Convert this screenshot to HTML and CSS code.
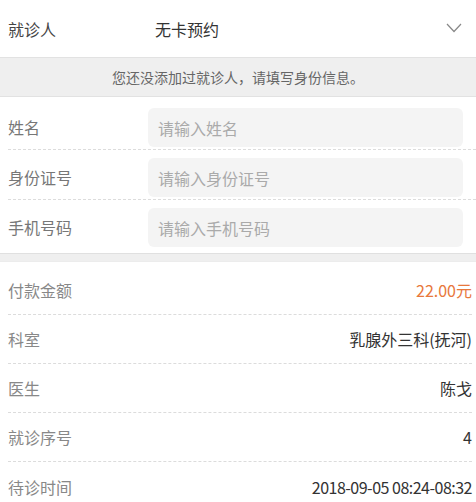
FILE: index.html
```html
<!DOCTYPE html>
<html lang="zh-CN">
<head>
    <meta charset="UTF-8">
    <meta name="viewport" content="width=device-width, initial-scale=1.0">
    <title>就诊人</title>
    <link rel="stylesheet" href="styles.css">
</head>
<body>
    <div class="patient-select">
        <span class="patient-label">就诊人</span>
        <span class="patient-value">无卡预约</span>
        <svg class="chevron" viewBox="0 0 16 10" width="16" height="10">
            <path d="M1 1 L8 8.5 L15 1" fill="none" stroke="#888" stroke-width="1.2"/>
        </svg>
    </div>
    <div class="notice">您还没添加过就诊人，请填写身份信息。</div>
    <div class="form">
        <div class="form-row">
            <label class="form-label">姓名</label>
            <input type="text" placeholder="请输入姓名">
        </div>
        <div class="form-row">
            <label class="form-label">身份证号</label>
            <input type="text" placeholder="请输入身份证号">
        </div>
        <div class="form-row">
            <label class="form-label">手机号码</label>
            <input type="text" placeholder="请输入手机号码">
        </div>
    </div>
    <div class="gap"></div>
    <div class="info">
        <div class="info-row">
            <span class="info-label">付款金额</span>
            <span class="info-value price">22.00元</span>
        </div>
        <div class="info-row">
            <span class="info-label">科室</span>
            <span class="info-value">乳腺外三科(抚河)</span>
        </div>
        <div class="info-row">
            <span class="info-label">医生</span>
            <span class="info-value">陈戈</span>
        </div>
        <div class="info-row">
            <span class="info-label">就诊序号</span>
            <span class="info-value">4</span>
        </div>
        <div class="info-row">
            <span class="info-label">待诊时间</span>
            <span class="info-value date">2018-09-05 08:24-08:32</span>
        </div>
    </div>
</body>
</html>
```

FILE: styles.css
```css
* {
    margin: 0;
    padding: 0;
    box-sizing: border-box;
    font-family: "Noto Sans CJK SC", "Noto Sans", sans-serif;
}
body {
    background: #fff;
    color: #333;
    font-size: 16px;
    overflow: hidden;
}
.patient-select {
    height: 57px;
    display: flex;
    align-items: center;
    padding: 0 14px 0 8px;
}
.patient-label {
    width: 147px;
    color: #444;
}
.patient-value {
    flex: 1;
    color: #333;
}
.chevron {
    margin-top: -1px;
}
.notice {
    height: 40px;
    background: #efefef;
    border-top: 1px solid #e2e2e2;
    border-bottom: 1px solid #e2e2e2;
    display: flex;
    align-items: center;
    justify-content: center;
    font-size: 14px;
    color: #666;
}
.form {
    padding: 3px 0 4px 8px;
}
.form-row {
    display: flex;
    align-items: center;
    padding: 8px 13px 2px 0;
    border-bottom: 1px dashed #dcdcdc;
}
.form-row:last-child {
    border-bottom: none;
}
.form-label {
    width: 140px;
    color: #777;
    margin-top: -2px;
}
input {
    flex: 1;
    height: 39px;
    border: none;
    border-radius: 6px;
    background: #f4f4f4;
    padding: 0 10px;
    font-size: 16px;
    color: #333;
    outline: none;
}
input::placeholder {
    color: #aaa;
}
.gap {
    height: 9px;
    background: #efefef;
    border-top: 1px solid #e0e0e0;
    border-bottom: 1px solid #ececec;
}
.info {
    padding: 4px 4px 0 8px;
}
.info-row {
    height: 49px;
    display: flex;
    align-items: center;
    justify-content: space-between;
    border-bottom: 1px dashed #dcdcdc;
}
.info-row:last-child {
    border-bottom: none;
}
.info-label {
    color: #888;
}
.info-value {
    color: #333;
}
.price {
    color: #e8783c;
}
.date {
    letter-spacing: -0.5px;
}
```
